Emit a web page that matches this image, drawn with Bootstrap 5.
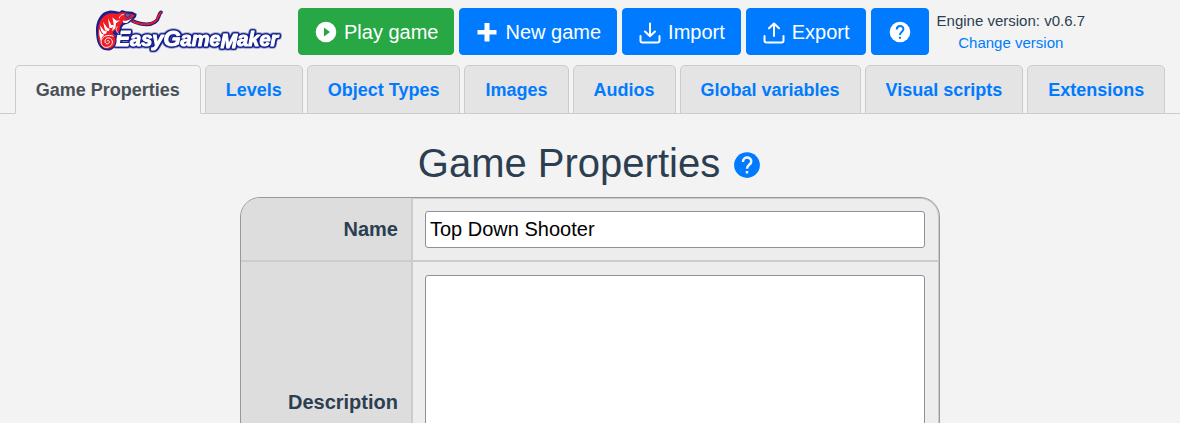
<!DOCTYPE html>
<html lang="en">
<head>
<meta charset="utf-8">
<meta name="viewport" content="width=device-width, initial-scale=1">
<title>EasyGameMaker</title>
<link href="https://cdn.jsdelivr.net/npm/bootstrap@5.3.0/dist/css/bootstrap.min.css" rel="stylesheet">
<style>
  body { background: #f3f3f3; color: #2c3e50; font-family: "Liberation Sans", Arial, sans-serif; }
  a { color: #007bff; }
  .toolbar { gap: 5px; padding-top: 8px; }
  .toolbar .btn { --bs-btn-color: #fff; --bs-btn-hover-color: #fff; --bs-btn-bg: #007bff; --bs-btn-border-color: #007bff; --bs-btn-hover-bg: #0069d9; --bs-btn-padding-x: 15px; --bs-btn-padding-y: 8px; --bs-btn-border-radius: 4px; gap: 6px; font-size: 20px; line-height: 30px; height: 47px; }
  .toolbar .btn-play { --bs-btn-bg: #28a745; --bs-btn-border-color: #28a745; --bs-btn-hover-bg: #218838; }
  .toolbar .btn-help { --bs-btn-padding-x: 16px; }
  .btn svg { width: 24px; height: 24px; flex: none; }
  .brand { margin-right: 10px; }
  .brand svg { display: block; width: 188px; height: 45px; overflow: visible; }
  .brand text { font: italic bold 60px "Liberation Sans", Arial, sans-serif; fill: #fff; stroke: #fff; stroke-width: 3px; stroke-linejoin: round; filter: drop-shadow(4px 0 0 #14208c) drop-shadow(-4px 0 0 #14208c) drop-shadow(0 4px 0 #14208c) drop-shadow(0 -4px 0 #14208c); }
  .brand .brand-cap { font-size: 66px; }
  .engine { font-size: 15px; line-height: 22px; margin-left: 3px; }
  .main-tabs { --bs-nav-tabs-border-color: #ccc; --bs-nav-tabs-border-radius: 5px; --bs-nav-link-padding-x: 20px; border-color: #ccc; gap: 4px; margin-top: 10px; padding: 0 14px; }
  .main-tabs .nav-link { background: #e4e4e4; border-color: #ccc; color: #007bff; font-size: 18px; font-weight: bold; line-height: 27px; padding-top: 11px; padding-bottom: 9px; }
  .main-tabs .nav-link.active { background: #f3f3f3; border-color: #ccc #ccc #f3f3f3; color: #495057; }
  .page-title { margin: 25px 0 10px; gap: 12px; }
  .page-title h1 { font-size: 40px; line-height: 48px; }
  .page-title svg { display: block; width: 30px; height: 30px; }
  .page-title a { padding-top: 3px; }
  .props { max-width: 700px; background: #ededed; border: 1px solid #999; border-radius: 20px; box-shadow: inset 0 0 0 1px #ccc; overflow: hidden; }
  .props-row + .props-row { border-top: 2px solid #ccc; }
  .props-label { width: 172px; flex: none; background: #ddd; border-right: 2px solid #ccc; padding-right: 13px; font-size: 20px; font-weight: bold; }
  .props-field { padding: 13px 14px 12px 12px; }
  .props-field .form-control { border: 1px solid #8f8f9d; border-radius: 3px; padding: 2px 4px; font-size: 20px; line-height: 31px; color: #000; background: #fff; }
  .props-field textarea { height: 254px; }
</style>
</head>
<body>
<header class="toolbar d-flex flex-wrap justify-content-center align-items-center">
  <a class="brand" href="#" aria-label="EasyGameMaker">
    <svg viewBox="27 27 564 135">
      <text x="88" y="137"><tspan class="brand-cap">E</tspan>asy<tspan class="brand-cap">G</tspan>ame<tspan dy="7">M</tspan><tspan dy="-7">aker</tspan></text>
      <path d="M140 63C164 73 190 78 207 66C221 57 216 43 225 37" fill="none" stroke="#14208c" stroke-width="11" stroke-linecap="round"/>
      <path d="M135 62C164 75 190 76 206 65C219 56 216 45 224 38" fill="none" stroke="#ed1823" stroke-width="6" stroke-linecap="round"/>
      <path d="M30 96C28 64 44 34 70 32C84 31 94 36 101 35L108 30L119 34L139 35L152 42L150 51L141 60L128 70L113 75L108 82L103 98L104 105L86 104L92 122C89 145 76 153 60 151C39 148 31 126 30 96Z" fill="#14208c"/>
      <path d="M36 98C35 66 51 41 75 40C89 40 97 44 107 37L122 38L146 45L140 55L123 65L109 68L103 77L99 96L91 98L89 88L80 98L85 106L89 124C86 140 76 148 61 146C43 143 36 125 36 98Z" fill="#f01b25"/>
      <g fill="#fff">
        <path d="M40 105L39 87L48 102L55 104L49 110L44 122Z"/>
        <path d="M45 92L42 76L54 92L63 94L60 101L52 102Z"/>
        <path d="M57 91L51 65L64 84L71 86L68 94Z"/>
        <path d="M70 84L66 55L76 75L82 75L79 84Z"/>
        <path d="M83 72L79 52L91 62L102 61L90 70L88 85L78 93Z"/>
        <path d="M110 62C121 64 132 58 140 54L123 69L112 68Z"/>
      </g>
      <path d="M82 109C68 103 50 107 46 121C43 134 52 143 62 142C76 141 83 129 77 119C71 110 58 113 57 123C56 132 67 135 70 127C71 122 65 119 63 124" fill="none" stroke="#fff" stroke-width="3"/>
      <path d="M94 79L90 90L98 102" fill="none" stroke="#fff" stroke-width="2"/>
      <path d="M100 55C102 45 110 43 114 44" fill="none" stroke="#fff" stroke-width="3"/>
      <ellipse cx="125" cy="46" rx="7" ry="6" fill="#5967a5" stroke="#14208c" stroke-width="2"/>
      <path d="M118 60C127 61 133 54 144 52" fill="none" stroke="#14208c" stroke-width="2"/>
    </svg>
  </a>
  <button type="button" class="btn btn-play d-flex align-items-center"><svg viewBox="0 0 24 24" fill="currentColor"><path fill-rule="evenodd" d="M12 1.700A10.300 10.300 0 1 0 12 22.300A10.300 10.300 0 1 0 12 1.700ZM10 7.500L16 12L10 16.500Z"/></svg>Play game</button>
  <button type="button" class="btn d-flex align-items-center"><svg viewBox="0 0 24 24" fill="currentColor"><path d="M9.500 3h5v7h7v4.500h-7v7h-5v-7h-7V10h7Z"/></svg>New game</button>
  <button type="button" class="btn d-flex align-items-center"><svg viewBox="0 0 24 24" fill="none" stroke="currentColor" stroke-width="2" stroke-linecap="round" stroke-linejoin="round"><path d="M2.500 16v4.500q0 2 2 2h15q2 0 2-2V16M12 3.500V16M7 11.500L12 16.300L17 11.500"/></svg>Import</button>
  <button type="button" class="btn d-flex align-items-center"><svg viewBox="0 0 24 24" fill="none" stroke="currentColor" stroke-width="2" stroke-linecap="round" stroke-linejoin="round"><path d="M2.500 16v4.500q0 2 2 2h15q2 0 2-2V16M12 16V3.500M7 8.300L12 3.500L17 8.300"/></svg>Export</button>
  <button type="button" class="btn btn-help d-flex align-items-center" aria-label="Help"><svg viewBox="0 0 24 24"><circle cx="12" cy="12" r="10.300" fill="#fff"/><path d="M8.800 9.500C8.800 4.800 15.400 5 15.400 9.100C15.400 11.700 12 12 12 15" fill="none" stroke="#007bff" stroke-width="2"/><path d="M11 16.800h2v2h-2Z" fill="#007bff"/></svg></button>
  <div class="engine text-center">Engine version: v0.6.7<br><a class="text-decoration-none" href="#">Change version</a></div>
</header>

<nav>
  <ul class="nav nav-tabs main-tabs justify-content-center">
    <li class="nav-item"><a class="nav-link active" aria-current="page" href="#">Game Properties</a></li>
    <li class="nav-item"><a class="nav-link" href="#">Levels</a></li>
    <li class="nav-item"><a class="nav-link" href="#">Object Types</a></li>
    <li class="nav-item"><a class="nav-link" href="#">Images</a></li>
    <li class="nav-item"><a class="nav-link" href="#">Audios</a></li>
    <li class="nav-item"><a class="nav-link" href="#">Global variables</a></li>
    <li class="nav-item"><a class="nav-link" href="#">Visual scripts</a></li>
    <li class="nav-item"><a class="nav-link" href="#">Extensions</a></li>
  </ul>
</nav>

<main>
  <div class="page-title d-flex justify-content-center align-items-center">
    <h1 class="m-0 fw-normal">Game Properties</h1>
    <a href="#" aria-label="Help about game properties"><svg viewBox="0 0 24 24"><circle cx="12" cy="12" r="10.300" fill="#007bff"/><path d="M8.800 9.500C8.800 4.800 15.400 5 15.400 9.100C15.400 11.700 12 12 12 15" fill="none" stroke="#f3f3f3" stroke-width="2"/><path d="M11 16.800h2v2h-2Z" fill="#f3f3f3"/></svg></a>
  </div>
  <form class="props mx-auto mb-4">
    <div class="props-row d-flex">
      <label class="props-label d-flex align-items-center justify-content-end" for="game-name">Name</label>
      <div class="props-field flex-grow-1"><input class="form-control" type="text" id="game-name" value="Top Down Shooter"></div>
    </div>
    <div class="props-row d-flex">
      <label class="props-label d-flex align-items-center justify-content-end" for="game-description">Description</label>
      <div class="props-field flex-grow-1"><textarea class="form-control" id="game-description"></textarea></div>
    </div>
  </form>
</main>
<script src="https://cdn.jsdelivr.net/npm/bootstrap@5.3.0/dist/js/bootstrap.bundle.min.js"></script>
</body>
</html>
